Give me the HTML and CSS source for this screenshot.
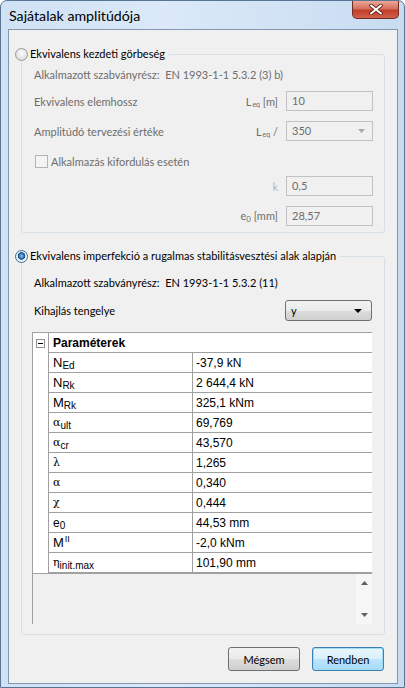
FILE: index.html
```html
<!DOCTYPE html>
<html>
<head>
<meta charset="utf-8">
<link rel="stylesheet" href="styles.css">
</head>
<body>
<div class="window">
  <div class="titlebar">
    <span class="title">Sajátalak amplitúdója</span>
    <div class="close">
      <svg width="14" height="11" viewBox="0 0 14 11"><path d="M2 1.5 L12 9.5 M12 1.5 L2 9.5" stroke="#5a2019" stroke-width="3.6" stroke-linecap="round"/><path d="M2 1.5 L12 9.5 M12 1.5 L2 9.5" stroke="#ffffff" stroke-width="2" stroke-linecap="round"/></svg>
    </div>
  </div>
  <div class="client">
    <fieldset class="group g1">
      <legend class="legend"><span class="radio"></span><span>Ekvivalens kezdeti görbeség</span></legend>
      <div class="inner">
        <div class="std dis">Alkalmazott szabványrész:&nbsp; EN 1993-1-1 5.3.2 (3) b)</div>
        <div class="frow mt9">
          <span class="flabel dis">Ekvivalens elemhossz</span>
          <span class="unit dis">L<span class="usub">eq</span> [m]</span>
          <span class="input">10</span>
        </div>
        <div class="frow mt10">
          <span class="flabel dis">Amplitúdó tervezési értéke</span>
          <span class="unit dis">L<span class="usub">eq</span> /</span>
          <span class="input">350<svg class="garrow" width="7" height="4" viewBox="0 0 7 4"><path d="M0 0 H7 L3.5 4 Z" fill="#a8a8a8"/></svg></span>
        </div>
        <div class="crow">
          <span class="check"></span><span class="dis">Alkalmazás kifordulás esetén</span>
        </div>
        <div class="frow mt7">
          <span class="flabel"></span>
          <span class="unit dis kl">k</span>
          <span class="input">0,5</span>
        </div>
        <div class="frow mt10">
          <span class="flabel"></span>
          <span class="unit dis">e<span class="usub0">0</span> [mm]</span>
          <span class="input">28,57</span>
        </div>
      </div>
    </fieldset>

    <fieldset class="group g2">
      <legend class="legend"><span class="radio on"></span><span>Ekvivalens imperfekció a rugalmas stabilitásvesztési alak alapján</span></legend>
      <div class="inner2">
        <div class="std std2">Alkalmazott szabványrész:&nbsp; EN 1993-1-1 5.3.2 (11)</div>
        <div class="frow2">
          <span class="flabel">Kihajlás tengelye</span>
          <span class="combo">y<svg class="barrow" width="8" height="4" viewBox="0 0 8 4"><path d="M0 0 H8 L4 4 Z" fill="#000"/></svg></span>
        </div>
        <div class="grid">
          <div class="row head">
            <span class="m"><span class="minus"></span></span>
            <span class="h">Paraméterek</span>
          </div>
          <div class="row"><span class="m"></span><span class="n">N<span class="s">Ed</span></span><span class="v">-37,9 kN</span></div>
          <div class="row"><span class="m"></span><span class="n">N<span class="s">Rk</span></span><span class="v">2 644,4 kN</span></div>
          <div class="row"><span class="m"></span><span class="n">M<span class="s">Rk</span></span><span class="v">325,1 kNm</span></div>
          <div class="row"><span class="m"></span><span class="n"><span class="gk">α</span><span class="s">ult</span></span><span class="v">69,769</span></div>
          <div class="row"><span class="m"></span><span class="n"><span class="gk">α</span><span class="s">cr</span></span><span class="v">43,570</span></div>
          <div class="row"><span class="m"></span><span class="n"><span class="gk">λ</span></span><span class="v">1,265</span></div>
          <div class="row"><span class="m"></span><span class="n"><span class="gk">α</span></span><span class="v">0,340</span></div>
          <div class="row"><span class="m"></span><span class="n"><span class="gk">χ</span></span><span class="v">0,444</span></div>
          <div class="row"><span class="m"></span><span class="n"><span class="sm">e</span><span class="s">0</span></span><span class="v">44,53 mm</span></div>
          <div class="row"><span class="m"></span><span class="n">M<span class="sp">II</span></span><span class="v">-2,0 kNm</span></div>
          <div class="row"><span class="m"></span><span class="n"><span class="gk">η</span><span class="s">init.max</span></span><span class="v">101,90 mm</span></div>
        </div>
        <div class="desc">
          <div class="desc-body"></div>
          <div class="sbar">
            <svg width="7" height="4" viewBox="0 0 7 4"><path d="M0 4 H7 L3.5 0 Z" fill="#606060"/></svg>
            <svg width="7" height="4" viewBox="0 0 7 4"><path d="M0 0 H7 L3.5 4 Z" fill="#606060"/></svg>
          </div>
        </div>
      </div>
    </fieldset>

    <div class="buttons">
      <button class="btn">Mégsem</button>
      <button class="btn def">Rendben</button>
    </div>
  </div>
</div>
</body>
</html>
```

FILE: styles.css
```css
html, body {
  margin: 0;
  padding: 0;
  background: #ffffff;
}
body {
  font-family: Lato, "Liberation Sans", sans-serif;
  font-size: 11px;
  color: #000;
}
.window {
  width: 405px;
  height: 688px;
  box-sizing: border-box;
  border: 1px solid #5a7594;
  border-radius: 7px 7px 0 0;
  background: linear-gradient(to right, #cfe1f4 0%, #dbe9f8 40%, #c8dcf1 100%);
  display: flex;
  flex-direction: column;
  padding: 0 6px 3px 7px;
}
.titlebar {
  height: 28px;
  display: flex;
  align-items: flex-start;
}
.title {
  font-size: 14.2px;
  line-height: 17px;
  margin-top: 6px;
  margin-left: 1px;
  color: #000;
}
.close {
  margin-left: auto;
  margin-right: -1px;
  width: 47px;
  height: 18px;
  box-sizing: border-box;
  border: 1px solid #6e2e26;
  border-top: none;
  border-radius: 0 0 5px 5px;
  background: linear-gradient(to bottom, #e9a89a 0%, #d7705e 45%, #c23f2a 55%, #d2604a 100%);
  display: flex;
  align-items: center;
  justify-content: center;
}
.client {
  flex: 1;
  box-sizing: border-box;
  border: 1px solid #8296b0;
  background: #f0f0f0;
  display: flex;
  flex-direction: column;
  padding: 0 12px 0 12px;
}
.group {
  margin: 0;
  padding: 0;
  border: 1px solid #d5dfe5;
  border-radius: 3px;
  min-width: 0;
}
.g1 { margin-top: 17px; }
.g2 { margin-top: 16px; }
.legend {
  margin-left: -7px;
  padding: 0 4px 0 0;
  height: 14px;
  line-height: 14px;
  display: flex;
  align-items: center;
  gap: 2px;
  color: #000;
}
.radio {
  width: 13px;
  height: 13px;
  box-sizing: border-box;
  border-radius: 50%;
  border: 1px solid #9a9a9a;
  background: radial-gradient(circle at 50% 40%, #fbfbfb 0%, #e6e6e6 55%, #cfcfcf 100%);
}
.radio.on {
  border-color: #3d6c97;
  background: radial-gradient(circle at 50% 45%, #8ccbf2 0%, #2f7ab8 28%, #1a4d7e 42%, #e8eef4 50%, #f4f6f8 75%, #d0d6dc 100%);
}
.inner {
  padding: 0 11px 6px 12px;
}
.dis { color: #6d6d6d; }
.std {
  margin-top: 6px;
  line-height: 15px;
  color: #6d6d6d;
}
.frow {
  display: grid;
  grid-template-columns: 1fr auto 87px;
  column-gap: 8px;
  align-items: center;
  height: 20px;
}
.mt9 { margin-top: 9px; }
.mt10 { margin-top: 10px; }
.mt7 { margin-top: 7px; }
.unit { text-align: right; }
.kl { font-weight: 300; color: #8a8a8a; }
.usub { font-size: 7px; vertical-align: -1px; margin-left: 1px; }
.usub0 { font-size: 8px; vertical-align: -2px; }
.input {
  box-sizing: border-box;
  height: 20px;
  border: 1px solid #c2c2c2;
  background: #f0f0f0;
  color: #6d6d6d;
  padding-left: 5px;
  line-height: 18px;
  display: flex;
  align-items: center;
  justify-content: space-between;
}
.garrow { margin-right: 7px; }
.crow {
  margin-top: 13px;
  height: 15px;
  display: flex;
  align-items: center;
  gap: 3px;
  padding-left: 1px;
}
.check {
  width: 13px;
  height: 13px;
  box-sizing: border-box;
  border: 1px solid #b4b4b4;
  background: #f4f4f4;
}
.inner2 {
  padding: 0 11px 10px 10px;
}
.std2 {
  margin-top: 12px;
  color: #000;
  padding-left: 2px;
}
.frow2 {
  margin-top: 10px;
  display: flex;
  align-items: center;
  justify-content: space-between;
  padding-left: 2px;
  padding-right: 1px;
}
.combo {
  width: 87px;
  height: 21px;
  box-sizing: border-box;
  border: 1px solid #707070;
  border-radius: 3px;
  background: linear-gradient(to bottom, #f2f2f2 0%, #ebebeb 50%, #dddddd 51%, #cfcfcf 100%);
  padding-left: 5px;
  padding-right: 9px;
  display: flex;
  align-items: center;
  justify-content: space-between;
}
.grid {
  margin-top: 11px;
  margin-right: 1px;
  border-top: 1px solid #a0a0a0;
  border-left: 1px solid #a0a0a0;
  background: #ffffff;
  font-family: "Liberation Sans", Arial, sans-serif;
  font-size: 12px;
}
.row {
  display: flex;
  height: 20px;
}
.m {
  width: 15px;
  flex: none;
  background: #ffffff;
  display: flex;
  align-items: center;
  justify-content: center;
}
.minus {
  width: 9px;
  height: 9px;
  box-sizing: border-box;
  border: 1px solid #919191;
  background-color: #fff;
  background-image: linear-gradient(#000, #000);
  background-size: 5px 1px;
  background-position: center;
  background-repeat: no-repeat;
}
.h {
  flex: 1;
  border-left: 1px solid #a0a0a0;
  border-bottom: 1px solid #a0a0a0;
  font-weight: bold;
  padding-left: 4px;
  display: flex;
  align-items: center;
}
.n {
  width: 144px;
  flex: none;
  box-sizing: border-box;
  border-left: 1px solid #a0a0a0;
  border-bottom: 1px solid #a0a0a0;
  padding-left: 4px;
  display: flex;
  align-items: center;
  font-size: 13px;
}
.v {
  flex: 1;
  border-left: 1px solid #a0a0a0;
  border-bottom: 1px solid #a0a0a0;
  padding-left: 3px;
  display: flex;
  align-items: center;
}
.s {
  font-size: 10px;
  position: relative;
  top: 3px;
}
.sp {
  font-size: 9px;
  position: relative;
  top: -4px;
  margin-left: 1px;
}
.gk {
  font-family: "DejaVu Serif", serif;
  font-size: 11px;
}
.sm { font-size: 12px; }
.desc {
  margin-right: 1px;
  height: 50px;
  display: flex;
  border-top: 1px solid #a0a0a0;
  border-left: 1px solid #a0a0a0;
  background: #f0f0f0;
}
.desc-body { flex: 1; }
.sbar {
  width: 16px;
  background: #f6f6f6;
  display: flex;
  flex-direction: column;
  align-items: center;
  justify-content: space-between;
  padding: 7px 0 7px;
  box-sizing: border-box;
}
.buttons {
  margin-top: 12px;
  display: flex;
  justify-content: flex-end;
  gap: 12px;
  padding-right: 1px;
}
.btn {
  width: 72px;
  height: 24px;
  box-sizing: border-box;
  border: 1px solid #707070;
  border-radius: 3px;
  background: linear-gradient(to bottom, #f2f2f2 0%, #ebebeb 50%, #dddddd 51%, #cfcfcf 100%);
  font-family: Lato, "Liberation Sans", sans-serif;
  font-size: 11px;
  color: #000;
  padding: 0;
}
.btn.def {
  border-color: #3c7fb1;
  box-shadow: inset 0 0 0 1px #9fdcf8;
  background: linear-gradient(to bottom, #eaf6fd 0%, #d9f0fc 50%, #bee6fd 51%, #a7d9f5 100%);
}
```
